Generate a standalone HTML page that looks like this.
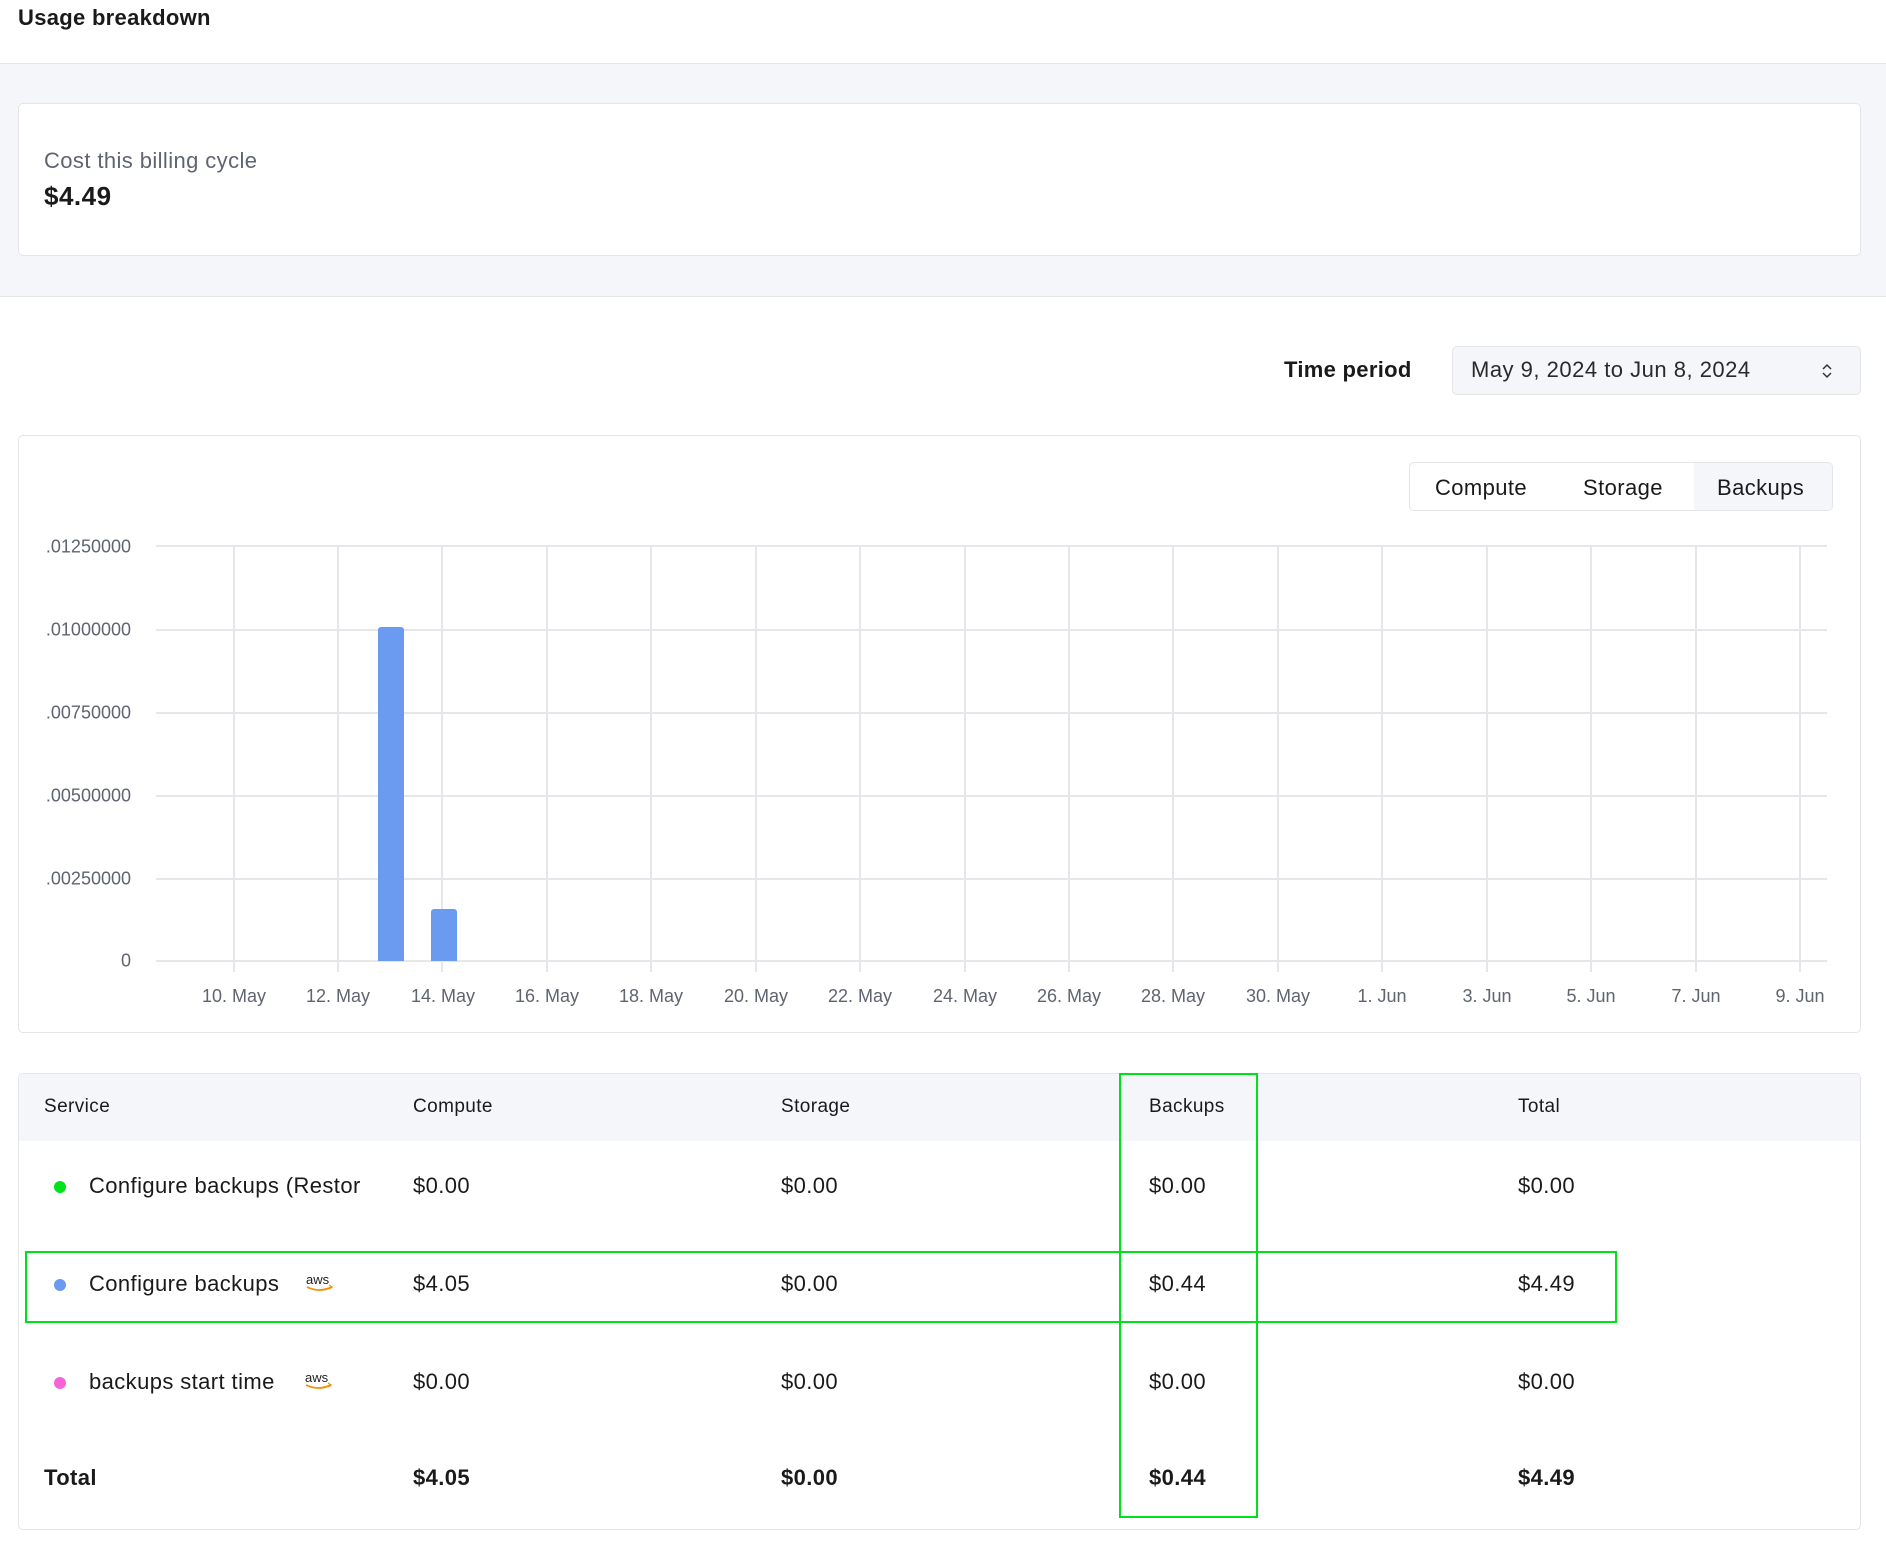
<!DOCTYPE html>
<html><head><meta charset="utf-8"><style>
*{margin:0;padding:0;box-sizing:border-box}
body{width:1886px;height:1548px;background:#fff;font-family:"Liberation Sans",Arial,sans-serif;color:#1a1a1a;position:relative;overflow:hidden}
.a{position:absolute;white-space:nowrap}
.gl{position:absolute;background:#e6e7ea}
.yl{position:absolute;right:1755px;font-size:18px;color:#5f6470;transform:translateY(-50%)}
.xl{position:absolute;font-size:18px;color:#5f6470;transform:translateX(-50%);top:986px}
.td{position:absolute;font-size:22px;transform:translateY(-50%);white-space:nowrap;letter-spacing:0.4px}
.dot{position:absolute;width:12px;height:12px;border-radius:50%;transform:translate(-50%,-50%)}
.aws{position:absolute;width:32px;height:22px}
</style></head><body>
<div class="a" style="left:18px;top:5px;font-size:22px;font-weight:bold;letter-spacing:0.3px">Usage breakdown</div>
<div class="a" style="left:0;top:63px;width:1886px;height:234px;background:#f5f6f9;border-top:1px solid #e4e5e8;border-bottom:1px solid #e4e5e8"></div>
<div class="a" style="left:18px;top:103px;width:1843px;height:153px;background:#fff;border:1px solid #e4e5e8;border-radius:5px"></div>
<div class="a" style="left:44px;top:148px;font-size:22px;color:#5f6470;letter-spacing:0.4px">Cost this billing cycle</div>
<div class="a" style="left:44px;top:181px;font-size:26px;font-weight:bold;letter-spacing:0.5px">$4.49</div>

<div class="a" style="left:1284px;top:357px;font-size:22px;font-weight:bold;letter-spacing:0.3px">Time period</div>
<div class="a" style="left:1452px;top:346px;width:409px;height:49px;background:#f5f6f9;border:1px solid #e4e5e8;border-radius:5px"></div>
<div class="a" style="left:1471px;top:357px;font-size:22px;color:#2a2a2a;letter-spacing:0.5px">May 9, 2024 to Jun 8, 2024</div>
<svg class="a" style="left:1820px;top:361px" width="14" height="20" viewBox="0 0 14 20"><path d="M3 8l4-4 4 4M3 12l4 4 4-4" fill="none" stroke="#333" stroke-width="1.5"/></svg>

<div class="a" style="left:18px;top:435px;width:1843px;height:598px;border:1px solid #e4e5e8;border-radius:5px"></div>
<div class="a" style="left:1409px;top:462px;width:424px;height:49px;border:1px solid #e4e5e8;border-radius:5px;overflow:hidden">
<div class="a" style="left:284px;top:0;width:140px;height:49px;background:#f5f6f9"></div>
<div class="a" style="left:25px;top:12px;font-size:22px;letter-spacing:0.4px">Compute</div>
<div class="a" style="left:173px;top:12px;font-size:22px;letter-spacing:0.4px">Storage</div>
<div class="a" style="left:307px;top:12px;font-size:22px;letter-spacing:0.4px">Backups</div>
</div>

<div class="gl" style="left:156px;top:545px;width:1671px;height:2px"></div>
<div class="gl" style="left:156px;top:629px;width:1671px;height:2px"></div>
<div class="gl" style="left:156px;top:712px;width:1671px;height:2px"></div>
<div class="gl" style="left:156px;top:795px;width:1671px;height:2px"></div>
<div class="gl" style="left:156px;top:878px;width:1671px;height:2px"></div>
<div class="gl" style="left:156px;top:960px;width:1671px;height:2px"></div>
<div class="yl" style="top:547px">.01250000</div>
<div class="yl" style="top:630px">.01000000</div>
<div class="yl" style="top:713px">.00750000</div>
<div class="yl" style="top:796px">.00500000</div>
<div class="yl" style="top:879px">.00250000</div>
<div class="yl" style="top:961px">0</div>

<div class="gl" style="left:233px;top:545px;width:2px;height:427px"></div>
<div class="gl" style="left:337px;top:545px;width:2px;height:427px"></div>
<div class="gl" style="left:441px;top:545px;width:2px;height:427px"></div>
<div class="gl" style="left:546px;top:545px;width:2px;height:427px"></div>
<div class="gl" style="left:650px;top:545px;width:2px;height:427px"></div>
<div class="gl" style="left:755px;top:545px;width:2px;height:427px"></div>
<div class="gl" style="left:859px;top:545px;width:2px;height:427px"></div>
<div class="gl" style="left:964px;top:545px;width:2px;height:427px"></div>
<div class="gl" style="left:1068px;top:545px;width:2px;height:427px"></div>
<div class="gl" style="left:1172px;top:545px;width:2px;height:427px"></div>
<div class="gl" style="left:1277px;top:545px;width:2px;height:427px"></div>
<div class="gl" style="left:1381px;top:545px;width:2px;height:427px"></div>
<div class="gl" style="left:1486px;top:545px;width:2px;height:427px"></div>
<div class="gl" style="left:1590px;top:545px;width:2px;height:427px"></div>
<div class="gl" style="left:1695px;top:545px;width:2px;height:427px"></div>
<div class="gl" style="left:1799px;top:545px;width:2px;height:427px"></div>

<div class="a" style="left:378px;top:627px;width:26px;height:334px;background:#6b9bf0;border-radius:3px 3px 0 0"></div>
<div class="a" style="left:431px;top:909px;width:26px;height:52px;background:#6b9bf0;border-radius:3px 3px 0 0"></div>

<div class="xl" style="left:234px">10. May</div>
<div class="xl" style="left:338px">12. May</div>
<div class="xl" style="left:443px">14. May</div>
<div class="xl" style="left:547px">16. May</div>
<div class="xl" style="left:651px">18. May</div>
<div class="xl" style="left:756px">20. May</div>
<div class="xl" style="left:860px">22. May</div>
<div class="xl" style="left:965px">24. May</div>
<div class="xl" style="left:1069px">26. May</div>
<div class="xl" style="left:1173px">28. May</div>
<div class="xl" style="left:1278px">30. May</div>
<div class="xl" style="left:1382px">1. Jun</div>
<div class="xl" style="left:1487px">3. Jun</div>
<div class="xl" style="left:1591px">5. Jun</div>
<div class="xl" style="left:1696px">7. Jun</div>
<div class="xl" style="left:1800px">9. Jun</div>

<div class="a" style="left:18px;top:1073px;width:1843px;height:457px;border:1px solid #e4e5e8;border-radius:5px;overflow:hidden">
<div class="a" style="left:0;top:0;width:1843px;height:67px;background:#f5f6f9"></div>
</div>
<div class="td" style="left:44px;top:1107px;font-size:19px">Service</div>
<div class="td" style="left:413px;top:1107px;font-size:19px">Compute</div>
<div class="td" style="left:781px;top:1107px;font-size:19px">Storage</div>
<div class="td" style="left:1149px;top:1107px;font-size:19px">Backups</div>
<div class="td" style="left:1518px;top:1107px;font-size:19px">Total</div>

<div class="dot" style="left:60px;top:1187px;background:#00e31c"></div>
<div class="td" style="left:89px;top:1186px;width:272px;overflow:hidden">Configure backups (Restore</div>
<div class="td" style="left:413px;top:1186px">$0.00</div>
<div class="td" style="left:781px;top:1186px">$0.00</div>
<div class="td" style="left:1149px;top:1186px">$0.00</div>
<div class="td" style="left:1518px;top:1186px">$0.00</div>

<div class="dot" style="left:60px;top:1285px;background:#6b9bf0"></div>
<div class="td" style="left:89px;top:1284px">Configure backups</div>
<svg class="aws" style="left:304px;top:1272px" viewBox="0 0 32 22"><text x="2" y="12" font-family="Liberation Sans,sans-serif" font-size="13" fill="#222">aws</text><path d="M3 15q12 6 25 0" fill="none" stroke="#f29100" stroke-width="1.8"/><path d="M25 13l3 2-3 2" fill="none" stroke="#f29100" stroke-width="1.3"/></svg>
<div class="td" style="left:413px;top:1284px">$4.05</div>
<div class="td" style="left:781px;top:1284px">$0.00</div>
<div class="td" style="left:1149px;top:1284px">$0.44</div>
<div class="td" style="left:1518px;top:1284px">$4.49</div>

<div class="dot" style="left:60px;top:1383px;background:#f764d8"></div>
<div class="td" style="left:89px;top:1382px">backups start time</div>
<svg class="aws" style="left:303px;top:1370px" viewBox="0 0 32 22"><text x="2" y="12" font-family="Liberation Sans,sans-serif" font-size="13" fill="#222">aws</text><path d="M3 15q12 6 25 0" fill="none" stroke="#f29100" stroke-width="1.8"/><path d="M25 13l3 2-3 2" fill="none" stroke="#f29100" stroke-width="1.3"/></svg>
<div class="td" style="left:413px;top:1382px">$0.00</div>
<div class="td" style="left:781px;top:1382px">$0.00</div>
<div class="td" style="left:1149px;top:1382px">$0.00</div>
<div class="td" style="left:1518px;top:1382px">$0.00</div>

<div class="td" style="left:44px;top:1478px;font-weight:bold">Total</div>
<div class="td" style="left:413px;top:1478px;font-weight:bold">$4.05</div>
<div class="td" style="left:781px;top:1478px;font-weight:bold">$0.00</div>
<div class="td" style="left:1149px;top:1478px;font-weight:bold">$0.44</div>
<div class="td" style="left:1518px;top:1478px;font-weight:bold">$4.49</div>

<div class="a" style="left:1119px;top:1073px;width:139px;height:445px;border:2px solid #00e01c"></div>
<div class="a" style="left:25px;top:1251px;width:1592px;height:72px;border:2px solid #00e01c"></div>
</body></html>
